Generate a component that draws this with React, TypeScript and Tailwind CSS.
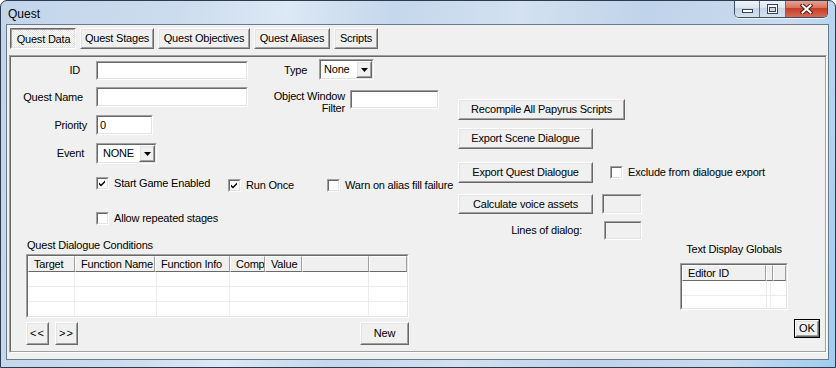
import React from 'react';

type Box = { children?: React.ReactNode; className?: string; fill?: string };

// classic 2px sunken edge (edit boxes, list views, check boxes)
function Sunken({ children, className = '', fill = 'bg-white' }: Box) {
  return (
    <div className={`shrink-0 border border-t-[#a0a0a0] border-l-[#a0a0a0] border-r-white border-b-white ${className}`}>
      <div className={`w-full h-full overflow-hidden border border-t-[#696969] border-l-[#696969] border-r-[#e3e3e3] border-b-[#e3e3e3] ${fill}`}>
        {children}
      </div>
    </div>
  );
}

// classic raised push button
function Button({ children, className = '' }: Box) {
  return (
    <div className={`shrink-0 border border-t-white border-l-white border-r-[#696969] border-b-[#696969] ${className}`}>
      <div className="w-full h-full flex items-center justify-center whitespace-nowrap bg-[#f0f0f0] border border-t-[#e3e3e3] border-l-[#e3e3e3] border-r-[#a0a0a0] border-b-[#a0a0a0]">
        {children}
      </div>
    </div>
  );
}

function CheckBox({ checked = false }: { checked?: boolean }) {
  return (
    <Sunken className="w-[13px] h-[13px]">
      {checked && (
        <svg width="9" height="9" viewBox="0 0 9 9" className="block">
          <path d="M1 3.5 L3 5.5 L7 1.5 L7 3.5 L3 7.5 L1 5.5 Z" fill="#000" />
        </svg>
      )}
    </Sunken>
  );
}

function Check({ label, checked = false, className = '' }: { label: string; checked?: boolean; className?: string }) {
  return (
    <div className={`flex items-center shrink-0 ${className}`}>
      <CheckBox checked={checked} />
      <span className="ml-[5px] whitespace-nowrap">{label}</span>
    </div>
  );
}

function Combo({ value, className = '', textPad = 'pl-[3px]' }: { value: string; className?: string; textPad?: string }) {
  return (
    <Sunken className={className}>
      <div className="flex h-full">
        <div className={`flex-1 flex items-center ${textPad}`}>{value}</div>
        <Button className="w-[16px] h-full">
          <svg width="7" height="4" viewBox="0 0 7 4" className="block">
            <polygon points="0,0 7,0 3.5,4" fill="#000" />
          </svg>
        </Button>
      </div>
    </Sunken>
  );
}

function HCell({ children, className = '' }: Box) {
  return (
    <div className={`h-full shrink-0 flex items-center pl-[5px] whitespace-nowrap overflow-hidden border border-t-white border-l-white border-r-[#a0a0a0] border-b-[#696969] ${className}`}>
      {children}
    </div>
  );
}

function Tab({ label, active = false, className = '' }: { label: string; active?: boolean; className?: string }) {
  if (active) {
    return (
      <div className={`shrink-0 h-[21px] border border-t-[#696969] border-l-[#696969] border-r-white border-b-white ${className}`}>
        <div className="w-full h-full flex items-center justify-center pt-[2px] pl-[1px] border border-t-[#a0a0a0] border-l-[#a0a0a0] border-r-[#e3e3e3] border-b-[#e3e3e3] bg-[repeating-conic-gradient(#ffffff_0%_25%,#e4e4e4_0%_50%)] bg-[length:2px_2px]">
          {label}
        </div>
      </div>
    );
  }
  return <Button className={`h-[21px] ${className}`}>{label}</Button>;
}

function CaptionButtons() {
  return (
    <div className="-mt-px mr-[7px] flex shrink-0 h-[18px] rounded-b-[5px] border border-t-0 border-[#3d4d62] overflow-hidden shadow-[0_1px_0_rgba(255,255,255,0.7)]">
      <div className="w-[25px] h-full flex items-end justify-center pb-[4px] border-r border-[#5f7088] bg-[linear-gradient(#f1f5fb,#dde6f1_45%,#c6d4e6_50%,#d6e2f0)]">
        <div className="w-[11px] h-[4px] bg-white border border-[#34455b]" />
      </div>
      <div className="w-[26px] h-full flex items-center justify-center border-r border-[#5f7088] bg-[linear-gradient(#f1f5fb,#dde6f1_45%,#c6d4e6_50%,#d6e2f0)]">
        <div className="w-[11px] h-[10px] bg-white border border-[#34455b] px-[1px] pt-[2px] pb-[1px]">
          <div className="w-full h-full border border-[#34455b] bg-[#c9d6e6]" />
        </div>
      </div>
      <div className="w-[41px] h-full flex items-center justify-center bg-[linear-gradient(#eba998,#d9735d_45%,#c43f28_50%,#d8694f)]">
        <svg width="13" height="10" viewBox="0 0 13 10" className="block">
          <path d="M2.5 1.5 L10.5 8.5 M10.5 1.5 L2.5 8.5" stroke="#4a2018" strokeWidth="4" strokeLinecap="square" />
          <path d="M2.5 1.5 L10.5 8.5 M10.5 1.5 L2.5 8.5" stroke="#ffffff" strokeWidth="2" strokeLinecap="square" />
        </svg>
      </div>
    </div>
  );
}

export default function App() {
  return (
    <div className="w-[836px] h-[368px] bg-white text-black text-[11px] leading-[13px] tracking-[-0.2px] font-['Liberation_Sans',Arial,sans-serif]">
      <div className="w-full h-full flex flex-col rounded-t-[7px] overflow-hidden border border-[#2c3b4d] bg-[linear-gradient(100deg,#c2d5eb_0%,#ccdcee_20%,#dce8f5_32%,#c4d7ec_44%,#d3e1f1_58%,#bfd3ea_72%,#cadbee_88%,#9fcdf0_100%)]">
        {/* Title bar */}
        <div className="h-[23px] shrink-0 flex items-start justify-between">
          <span className="pl-[7px] pt-[6px] text-[12px] leading-[14px] tracking-normal">Quest</span>
          <CaptionButtons />
        </div>

        {/* Client area */}
        <div className="flex-1 ml-[5px] mr-[6px] mb-[7px] flex flex-col border border-[#6b7b8e] bg-[#f0f0f0]">
          {/* Tab strip */}
          <div className="flex gap-[4px] pt-[3px] pl-[3px]">
            <Tab label="Quest Data" active className="w-[66px]" />
            <Tab label="Quest Stages" className="w-[74px]" />
            <Tab label="Quest Objectives" className="w-[92px]" />
            <Tab label="Quest Aliases" className="w-[76px]" />
            <Tab label="Scripts" className="w-[44px]" />
          </div>

          {/* Tab page */}
          <div className="flex-1 mt-[6px] mb-[6px] ml-[2px] mr-[1px] border border-t-[#a0a0a0] border-l-[#a0a0a0] border-r-white border-b-white">
            <div className="w-full h-full flex border border-t-[#696969] border-l-[#696969] border-r-[#a0a0a0] border-b-[#a0a0a0]">
              {/* Left column */}
              <div className="w-[447px] shrink-0 flex flex-col">
                <div className="mt-[4px] h-[19px] flex items-start">
                  <div className="w-[77px] pr-[8px] text-right leading-[19px]">ID</div>
                  <Sunken className="ml-[8px] w-[152px] h-[19px]" />
                  <div className="ml-[36px] w-[35px] leading-[19px]">Type</div>
                  <Combo value="None" className="-mt-[2px] w-[55px] h-[21px]" />
                </div>

                <div className="mt-[7px] h-[20px] flex items-start">
                  <div className="w-[77px] pr-[5px] text-right leading-[20px]">Quest Name</div>
                  <Sunken className="ml-[8px] w-[152px] h-[20px]" />
                  <div className="ml-[17px] mt-[3px] w-[80px] text-right leading-[12px]">
                    Object Window
                    <br />
                    Filter
                  </div>
                  <Sunken className="ml-[5px] mt-[3px] w-[89px] h-[19px]" />
                </div>

                <div className="mt-[8px] h-[20px] flex items-start">
                  <div className="w-[77px] pr-[1px] text-right leading-[20px]">Priority</div>
                  <Sunken className="ml-[8px] w-[57px] h-[20px]">
                    <div className="pl-[2px] leading-[16px]">0</div>
                  </Sunken>
                </div>

                <div className="mt-[8px] h-[21px] flex items-start">
                  <div className="w-[77px] pr-[4px] text-right leading-[21px]">Event</div>
                  <Combo value="NONE" textPad="pl-[5px]" className="ml-[8px] w-[61px] h-[21px]" />
                </div>

                <div className="mt-[13px] ml-[85px] flex items-start">
                  <Check label="Start Game Enabled" checked className="w-[132px]" />
                  <Check label="Run Once" checked className="mt-[2px] w-[99px]" />
                  <Check label="Warn on alias fill failure" className="mt-[2px]" />
                </div>

                <Check label="Allow repeated stages" className="mt-[20px] ml-[85px]" />

                <div className="mt-[14px] ml-[16px]">Quest Dialogue Conditions</div>

                <Sunken className="mt-[2px] ml-[15px] w-[383px] h-[64px]">
                  <div className="h-[16px] flex bg-[#f0f0f0]">
                    <HCell className="w-[47px]">Target</HCell>
                    <HCell className="w-[80px]">Function Name</HCell>
                    <HCell className="w-[75px]">Function Info</HCell>
                    <HCell className="w-[35px]">Comp</HCell>
                    <HCell className="w-[37px]">Value</HCell>
                    <HCell className="w-[67px]" />
                    <HCell className="flex-1" />
                  </div>
                  {[0, 1, 2].map((r) => (
                    <div key={r} className="h-[15px] flex border-b border-[#ececec]">
                      <div className="w-[47px] border-r border-[#ececec]" />
                      <div className="w-[82px] border-r border-[#ececec]" />
                      <div className="w-[73px] border-r border-[#ececec]" />
                      <div className="w-[139px] border-r border-[#ececec]" />
                      <div className="flex-1" />
                    </div>
                  ))}
                </Sunken>

                <div className="mt-[4px] ml-[15px] w-[383px] flex">
                  <Button className="w-[23px] h-[23px]">
                    <span className="tracking-[1px]">&lt;&lt;</span>
                  </Button>
                  <Button className="ml-[6px] w-[23px] h-[23px]">
                    <span className="tracking-[1px]">&gt;&gt;</span>
                  </Button>
                  <Button className="ml-auto w-[49px] h-[23px]">New</Button>
                </div>
              </div>

              {/* Right column */}
              <div className="flex-1 flex flex-col">
                <Button className="mt-[42px] w-[167px] h-[21px]">Recompile All Papyrus Scripts</Button>
                <Button className="mt-[8px] w-[135px] h-[21px]">Export Scene Dialogue</Button>

                <div className="mt-[13px] flex items-start">
                  <Button className="w-[135px] h-[21px]">Export Quest Dialogue</Button>
                  <Check label="Exclude from dialogue export" className="ml-[17px] mt-[4px]" />
                </div>

                <div className="mt-[11px] flex items-start">
                  <Button className="w-[135px] h-[20px]">Calculate voice assets</Button>
                  <Sunken fill="bg-[#f0f0f0]" className="ml-[9px] w-[40px] h-[20px]" />
                </div>

                <div className="mt-[7px] flex items-start">
                  <div className="w-[124px] text-right leading-[19px]">Lines of dialog:</div>
                  <Sunken fill="bg-[#f0f0f0]" className="ml-[22px] w-[38px] h-[19px]" />
                </div>

                <div className="mt-[3px] ml-[222px] flex items-start">
                  <div className="w-[108px] flex flex-col items-center">
                    <div className="whitespace-nowrap">Text Display Globals</div>
                    <Sunken className="mt-[7px] w-[108px] h-[47px]">
                      <div className="h-[16px] flex bg-[#f0f0f0]">
                        <HCell className="w-[84px]">Editor ID</HCell>
                        <HCell className="w-[4px] pl-0" />
                        <HCell className="flex-1" />
                      </div>
                      {[0, 1].map((r) => (
                        <div key={r} className="h-[15px] flex border-b border-[#ececec]">
                          <div className="w-[85px] border-r border-[#ececec]" />
                          <div className="w-[4px] border-r border-[#ececec]" />
                          <div className="flex-1" />
                        </div>
                      ))}
                    </Sunken>
                  </div>
                  <div className="ml-[6px] mt-[76px] w-[26px] h-[19px] border border-black">
                    <Button className="w-full h-full">
                      <span className="tracking-normal">OK</span>
                    </Button>
                  </div>
                </div>
              </div>
            </div>
          </div>
        </div>
      </div>
    </div>
  );
}
